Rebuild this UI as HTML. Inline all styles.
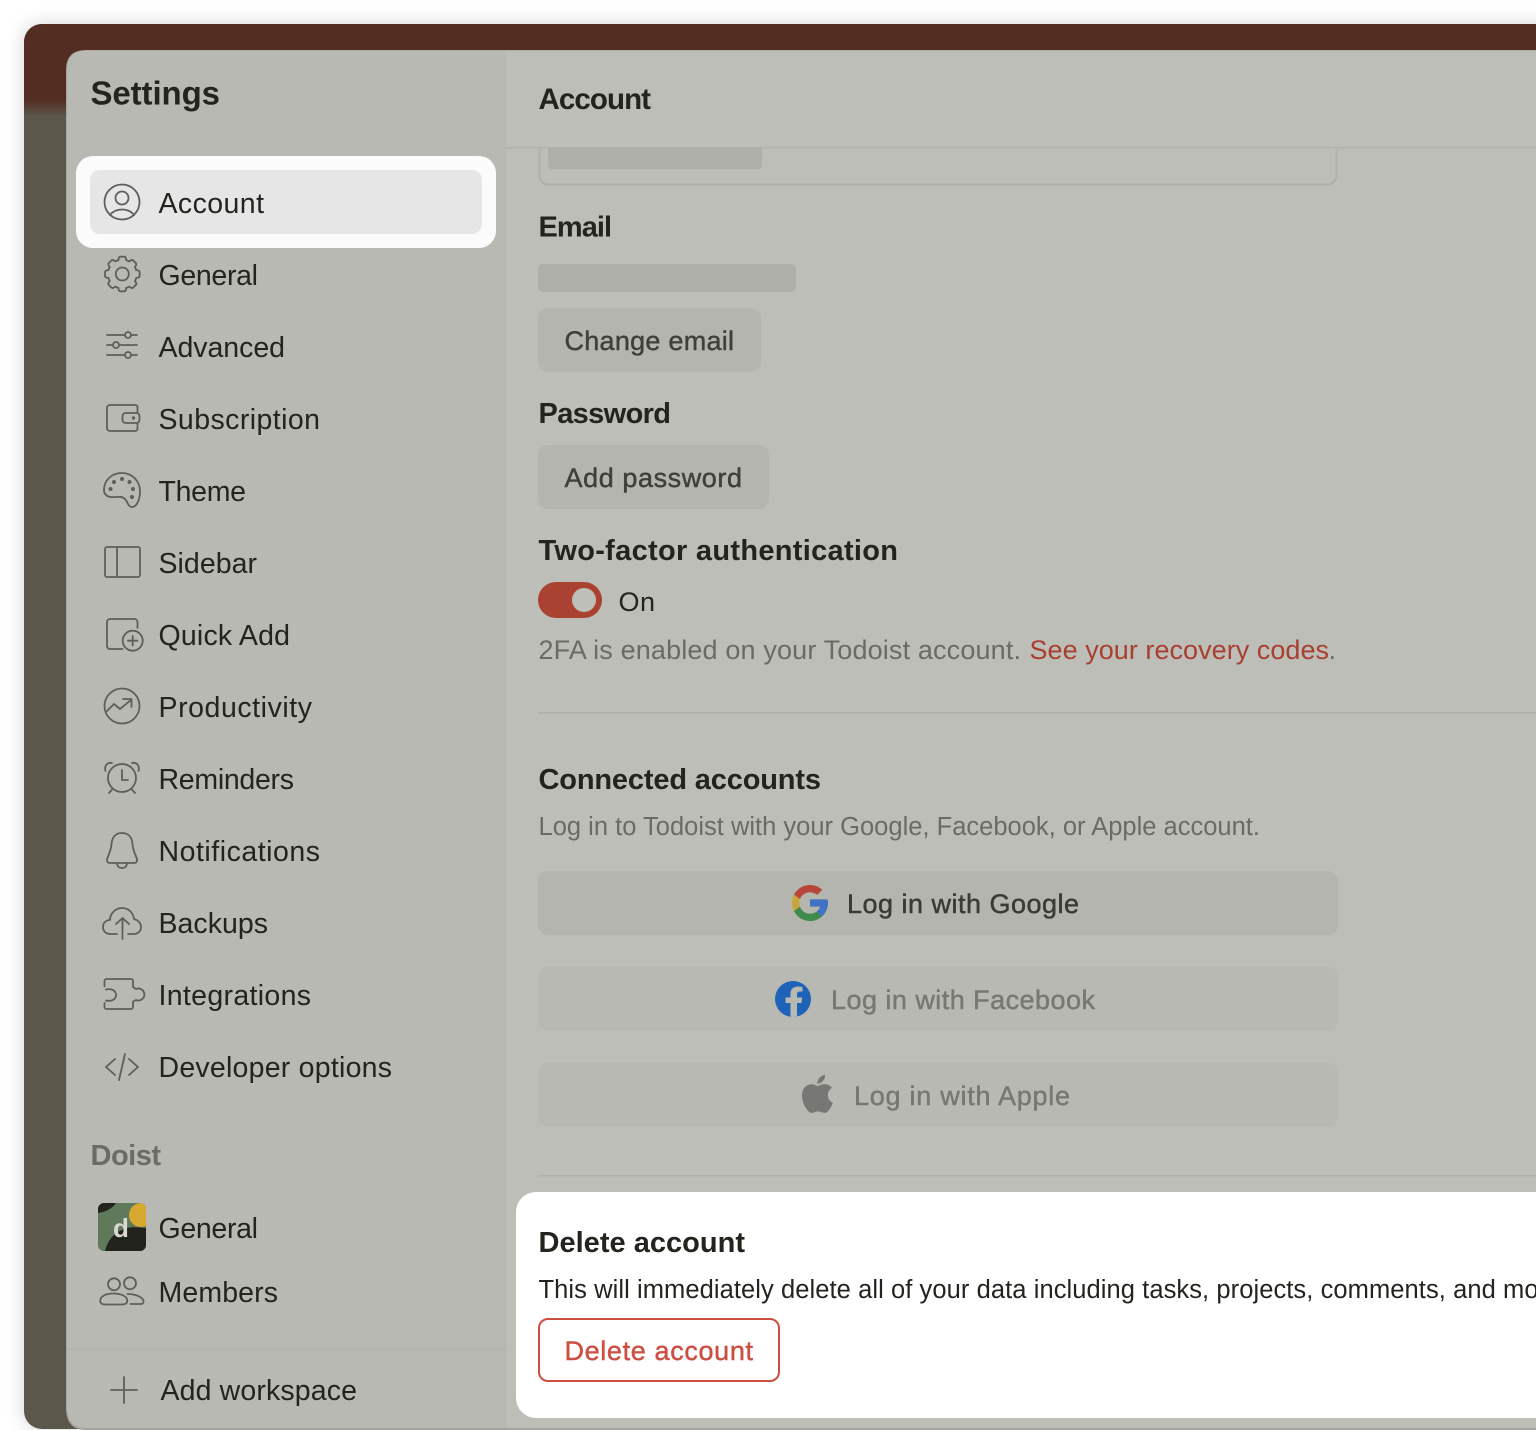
<!DOCTYPE html>
<html lang="en">
<head>
<meta charset="utf-8">
<title>Settings</title>
<style>
html,body{margin:0;padding:0;width:1536px;height:1430px;background:#fff;overflow:hidden}
#win{position:absolute;left:24px;top:24px;width:1560px;height:1405px;border-radius:18px;overflow:hidden;background:#5b574a;box-shadow:0 0 18px rgba(60,50,70,.22)}
#win i{position:absolute;left:0;top:0;width:100%;height:92px;display:block;background:linear-gradient(#532d22 0,#532d22 76px,#5b574a 92px)}
svg{position:absolute;left:0;top:0}
text{font-family:"Liberation Sans",sans-serif;font-size:28.5px;fill:#24241f}
.b{font-weight:700;font-size:29px}
.m{stroke:currentColor;stroke-width:.45px}
.ic{fill:none;stroke:#5e5f5a;stroke-width:1.8;stroke-linecap:round;stroke-linejoin:round}
.ic2{fill:#5e5f5a}
</style>
</head>
<body>
<div id="win"><i></i></div>
<svg width="1536" height="1430" viewBox="0 0 1536 1430" xmlns="http://www.w3.org/2000/svg">
<defs>
<clipPath id="av"><rect x="98" y="1203" width="48" height="48" rx="6"/></clipPath>
<clipPath id="fb"><circle cx="793" cy="999" r="18"/></clipPath>
</defs>

<!-- modal -->
<path d="M86 50H1536V1430H86Q66 1430 66 1408V70Q66 50 86 50Z" fill="#a3a39d"/>
<path d="M86 50.500H505.500V1428H86Q67 1428 67 1408V70Q67 50.500 86 50.500Z" fill="#b8b9b3"/>
<rect x="505.500" y="50.500" width="1031" height="1377.500" fill="#bdbeb8"/>
<rect x="505" y="50" width="1" height="1378" fill="#b5b6b0"/>

<!-- sidebar -->
<text x="90.500" y="104.500" class="b" style="font-size:33px" textLength="129.500">Settings</text>
<rect x="76" y="156" width="420" height="92" rx="17" fill="#fbfbfb"/>
<rect x="90" y="170" width="392" height="64" rx="10" fill="#e6e6e6"/>

<text x="158.500" y="213" textLength="105.500">Account</text>
<text x="158.500" y="285" textLength="99.500">General</text>
<text x="158.500" y="357" textLength="126.500">Advanced</text>
<text x="158.500" y="429" textLength="161.500">Subscription</text>
<text x="158.500" y="501" textLength="87.500">Theme</text>
<text x="158.500" y="573" textLength="98.500">Sidebar</text>
<text x="158.500" y="645" textLength="131.500">Quick Add</text>
<text x="158.500" y="717" textLength="153.500">Productivity</text>
<text x="158.500" y="789" textLength="135.500">Reminders</text>
<text x="158.500" y="861" textLength="161.500">Notifications</text>
<text x="158.500" y="933" textLength="109.500">Backups</text>
<text x="158.500" y="1005" textLength="152.500">Integrations</text>
<text x="158.500" y="1077" textLength="233.500">Developer options</text>
<text x="90.500" y="1165" class="b" style="fill:#6b6c67" textLength="70.500">Doist</text>
<text x="158.500" y="1238" textLength="99.500">General</text>
<text x="158.500" y="1302" textLength="119.500">Members</text>
<rect x="67" y="1348.500" width="438" height="1.500" fill="#b0b1ab"/>
<text x="160.500" y="1400" textLength="196.500">Add workspace</text>

<!-- icons -->
<g class="ic">
  <!-- account -->
  <circle cx="122" cy="202" r="17.500"/><circle cx="122" cy="198" r="6.500"/>
  <path d="M110 215C113 211 117 209.500 122 209.500C127 209.500 131 211 134 215"/>
  <!-- gear -->
  <circle cx="122.300" cy="274" r="6.500"/>
  <g transform="translate(122.300 274)">
    <path d="M-4-13.800C-3.600-16-3.400-17.300-2-17.300H2C3.400-17.300 3.600-16 4-13.800C6-13.300 6.700-12.900 6.930-12.560"/>
    <path transform="rotate(45)" d="M-4-13.800C-3.600-16-3.400-17.300-2-17.300H2C3.400-17.300 3.600-16 4-13.800C6-13.300 6.700-12.900 6.930-12.560"/>
    <path transform="rotate(90)" d="M-4-13.800C-3.600-16-3.400-17.300-2-17.300H2C3.400-17.300 3.600-16 4-13.800C6-13.300 6.700-12.900 6.930-12.560"/>
    <path transform="rotate(135)" d="M-4-13.800C-3.600-16-3.400-17.300-2-17.300H2C3.400-17.300 3.600-16 4-13.800C6-13.300 6.700-12.900 6.930-12.560"/>
    <path transform="rotate(180)" d="M-4-13.800C-3.600-16-3.400-17.300-2-17.300H2C3.400-17.300 3.600-16 4-13.800C6-13.300 6.700-12.900 6.930-12.560"/>
    <path transform="rotate(225)" d="M-4-13.800C-3.600-16-3.400-17.300-2-17.300H2C3.400-17.300 3.600-16 4-13.800C6-13.300 6.700-12.900 6.930-12.560"/>
    <path transform="rotate(270)" d="M-4-13.800C-3.600-16-3.400-17.300-2-17.300H2C3.400-17.300 3.600-16 4-13.800C6-13.300 6.700-12.900 6.930-12.560"/>
    <path transform="rotate(315)" d="M-4-13.800C-3.600-16-3.400-17.300-2-17.300H2C3.400-17.300 3.600-16 4-13.800C6-13.300 6.700-12.900 6.930-12.560"/>
  </g>
  <!-- sliders -->
  <path d="M107 335H124M132 335H137M107 345H112M120 345H137M107 355H124M132 355H137"/>
  <circle cx="128" cy="335" r="3"/><circle cx="116" cy="345" r="3"/><circle cx="128" cy="355" r="3"/>
  <!-- wallet -->
  <path d="M137.500 413V407A2 2 0 0 0 135.500 405H110A3 3 0 0 0 107 408V428A3 3 0 0 0 110 431H135.500A2 2 0 0 0 137.500 429V423"/>
  <rect x="122.500" y="413" width="17" height="10" rx="3"/>
  <!-- palette -->
  <path d="M122 473C132 473 140 481 140 491C140 499 137 507 132 507C128 507 128 502 125 499C121 495 115 498 110 497C106 496 104 494 104 490C104 480 112 473 122 473Z"/>
  <!-- sidebar -->
  <rect x="105" y="547" width="35" height="30" rx="2"/><path d="M117 547V577"/>
  <!-- quick add -->
  <path d="M137.500 628V622A3 3 0 0 0 134.500 619H110A3 3 0 0 0 107 622V646A3 3 0 0 0 110 649H122.500"/>
  <circle cx="132.700" cy="640.700" r="10"/><path d="M132.700 636V645.500M128 640.700H137.500"/>
  <!-- productivity -->
  <circle cx="122" cy="706" r="17.500"/>
  <path d="M107 711L114 704L120 709L131 700M123 699H131.500V707"/>
  <!-- alarm -->
  <circle cx="122" cy="778" r="14"/>
  <path d="M122 770V780H128M105.500 771C104 766 107 762 112 763M138.500 771C140 766 137 762 132 763M109 793L112.500 789M135 793L131.500 789"/>
  <!-- bell -->
  <path d="M122 833C115 833 112 838 111.500 844C111 852 107 857 107 860C107 862 108 863 110 863H134C136 863 137 862 137 860C137 857 133 852 132.500 844C132 838 129 833 122 833Z"/>
  <path d="M117 863C117 866 119 868 122 868C125 868 127 866 127 863"/>
  <!-- cloud -->
  <path d="M117 934H110C106 934 103 931 103 927C103 923 106 920 110 920C110 913 116 908 122 908C128 908 133 912 134 919C138 920 141 923 141 927C141 931 138 934 134 934H128"/>
  <path d="M122.500 939V918M116 924L122.500 918L129 924"/>
  <!-- puzzle -->
  <path d="M104.500 986.500V981A2 2 0 0 1 106.500 979H131A2 2 0 0 1 133 981V987L136 989A6 6 0 1 1 136 1000L133 1001.500V1007A2 2 0 0 1 131 1009H106.500A2 2 0 0 1 104.500 1007V1003"/>
  <path d="M106 989.500C112 988 116 991 116 995C116 999 112 1002 106 1000.500"/>
  <!-- code -->
  <path d="M115 1059L106 1067L115 1075M129 1059L138 1067L129 1075M125 1054L119 1080"/>
  <!-- members -->
  <circle cx="114" cy="1284.300" r="6"/><circle cx="130" cy="1283.300" r="6"/>
  <path d="M105 1304.500H122C125.500 1304.500 127.300 1303 127.300 1301C127.300 1296 121 1293.500 113.500 1293.500C106 1293.500 100.200 1296 100.200 1301C100.200 1303 102 1304.500 105 1304.500Z"/>
  <path d="M127.500 1294C137 1294 143.500 1298 143.500 1301.500C143.500 1303 142.500 1304 141 1304H130.500"/>
  <!-- plus -->
  <path d="M124 1377V1403M111 1390H137"/>
</g>
<g class="ic2">
  <circle cx="133.500" cy="418" r="1.700"/>
  <circle cx="122" cy="479" r="2"/><circle cx="114" cy="482" r="2"/><circle cx="129.500" cy="482" r="2"/>
  <circle cx="110.500" cy="489" r="2"/><circle cx="133" cy="489" r="2"/><circle cx="132" cy="497" r="2"/>
</g>

<!-- avatar -->
<g clip-path="url(#av)">
  <rect x="98" y="1203" width="48" height="48" fill="#5f7a5a"/>
  <path d="M98 1203H116C112 1209 105 1212 98 1213Z" fill="#23231e"/>
  <path d="M105 1251C107 1243 112 1234 122 1230C130 1226 136 1227 146 1228V1251Z" fill="#23231e"/>
  <circle cx="141" cy="1215" r="12" fill="#d7a92f"/>
</g>
<text x="113" y="1237" class="b" style="font-size:26px;fill:#d9d9d2" textLength="16">d</text>

<!-- right header -->
<text x="538.500" y="109" class="b" style="font-size:29.500px" textLength="112.500">Account</text>
<rect x="506" y="147" width="1030" height="1.500" fill="#b0b1ab"/>
<path d="M539.500 149V175A9 9 0 0 0 548.500 184.500H1327A9 9 0 0 0 1336.500 175V149" fill="none" stroke="#afb0aa" stroke-width="2"/>
<path d="M548 148.500H762V164A5 5 0 0 1 757 169.500H553A5 5 0 0 1 548 164Z" fill="#aeafa8"/>

<text x="538.500" y="236.500" class="b" textLength="73.500">Email</text>
<rect x="538" y="264" width="258" height="28" rx="5" fill="#aeafa8"/>
<rect x="538" y="308" width="223" height="64" rx="10" fill="#b4b5af"/>
<text x="564.500" y="350" class="m" style="color:#3f3f3b;fill:#3f3f3b;font-size:27px" textLength="169.500">Change email</text>

<text x="538.500" y="423" class="b" textLength="132.500">Password</text>
<rect x="538" y="445" width="231" height="64" rx="10" fill="#b4b5af"/>
<text x="564.500" y="487" class="m" style="color:#3f3f3b;fill:#3f3f3b;font-size:27px" textLength="177.500">Add password</text>

<text x="538.500" y="560" class="b" textLength="359.500">Two-factor authentication</text>
<rect x="538" y="582" width="64" height="36" rx="18" fill="#aa4232"/>
<circle cx="584" cy="600" r="12" fill="#bdbeb8"/>
<text x="618.500" y="611" style="font-size:27px" textLength="36.500">On</text>
<text x="538.500" y="659" style="font-size:27px;fill:#6a6b66" textLength="482.500">2FA is enabled on your Todoist account.</text>
<text x="1029.500" y="659" style="font-size:27px;fill:#a83f30" textLength="299.500">See your recovery codes</text>
<text x="1328.500" y="659" style="font-size:27px;fill:#6a6b66">.</text>
<rect x="538" y="712" width="998" height="1.500" fill="#b0b1ab"/>

<text x="538.500" y="789" class="b" textLength="282.500">Connected accounts</text>
<text x="538.500" y="835" style="font-size:25.500px;fill:#6a6b66" textLength="721.500">Log in to Todoist with your Google, Facebook, or Apple account.</text>

<rect x="538" y="871" width="800" height="64" rx="10" fill="#b4b5af"/>
<g transform="translate(788.400 881.400) scale(.9)">
  <path fill="#c6a63c" d="M43.611,20.083H42V20H24v8h11.303c-1.649,4.657-6.08,8-11.303,8c-6.627,0-12-5.373-12-12c0-6.627,5.373-12,12-12c3.059,0,5.842,1.154,7.961,3.039l5.657-5.657C34.046,6.053,29.268,4,24,4C12.955,4,4,12.955,4,24c0,11.045,8.955,20,20,20c11.045,0,20-8.955,20-20C44,22.659,43.862,21.35,43.611,20.083z"/>
  <path fill="#b8463a" d="M6.306,14.691l6.571,4.819C14.655,15.108,18.961,12,24,12c3.059,0,5.842,1.154,7.961,3.039l5.657-5.657C34.046,6.053,29.268,4,24,4C16.318,4,9.656,8.337,6.306,14.691z"/>
  <path fill="#3f8a4d" d="M24,44c5.166,0,9.86-1.977,13.409-5.192l-6.19-5.238C29.211,35.091,26.715,36,24,36c-5.202,0-9.619-3.317-11.283-7.946l-6.522,5.025C9.505,39.556,16.227,44,24,44z"/>
  <path fill="#3f72c4" d="M43.611,20.083H42V20H24v8h11.303c-0.792,2.237-2.231,4.166-4.087,5.571c0.001-0.001,0.002-0.001,0.003-0.002l6.19,5.238C36.971,39.205,44,34,44,24C44,22.659,43.862,21.35,43.611,20.083z"/>
</g>
<text x="847" y="913" class="m" style="color:#3a3a36;fill:#3a3a36;font-size:27px" textLength="232">Log in with Google</text>

<rect x="538" y="967" width="800" height="64" rx="10" fill="#b8b9b3"/>
<circle cx="793" cy="999" r="18" fill="#1e63b8"/>
<path clip-path="url(#fb)" fill="#b8b9b3" d="M797 1018V1003H801.500L802.300 997.500H797V994.500C797 992.500 798 991.500 800 991.500H802.500V987C801 986.700 799.500 986.500 798 986.500C793.500 986.500 790.500 989 790.500 993.500V997.500H785.500V1003H790.500V1018Z"/>
<text x="831" y="1009" class="m" style="color:#777873;fill:#777873;font-size:27px" textLength="264">Log in with Facebook</text>

<rect x="538" y="1063" width="800" height="64" rx="10" fill="#b8b9b3"/>
<path transform="translate(798.500 1075) scale(1.580)" fill="#777873" d="M12.152 6.896c-.948 0-2.415-1.078-3.96-1.04-2.04.027-3.91 1.183-4.961 3.014-2.117 3.675-.546 9.103 1.519 12.09 1.013 1.454 2.208 3.09 3.792 3.039 1.52-.065 2.09-.987 3.935-.987 1.831 0 2.35.987 3.96.948 1.637-.026 2.676-1.48 3.676-2.948 1.156-1.688 1.636-3.325 1.662-3.415-.039-.013-3.182-1.221-3.22-4.857-.026-3.04 2.48-4.494 2.597-4.559-1.429-2.09-3.623-2.324-4.39-2.376-2-.156-3.675 1.09-4.61 1.09zM15.530 3.830c.843-1.012 1.400-2.427 1.245-3.830-1.207.052-2.662.805-3.532 1.818-.780.896-1.454 2.338-1.273 3.714 1.338.104 2.715-.688 3.559-1.701"/>
<text x="854" y="1105" class="m" style="color:#777873;fill:#777873;font-size:27px" textLength="216">Log in with Apple</text>

<rect x="538" y="1175" width="998" height="1.500" fill="#b0b1ab"/>

<!-- delete panel -->
<path d="M536 1192H1536V1418H536A20 20 0 0 1 516 1398V1212A20 20 0 0 1 536 1192Z" fill="#fff"/>
<text x="538.500" y="1252" class="b" textLength="206.500">Delete account</text>
<text x="538.500" y="1298" style="font-size:25.500px" textLength="1030">This will immediately delete all of your data including tasks, projects, comments, and more.</text>
<rect x="539" y="1319" width="240" height="62" rx="9" fill="#fff" stroke="#cc4f42" stroke-width="2"/>
<text x="564.500" y="1360" class="m" style="color:#cc4f42;fill:#cc4f42;font-size:27px" textLength="188.500">Delete account</text>
</svg>
</body>
</html>
